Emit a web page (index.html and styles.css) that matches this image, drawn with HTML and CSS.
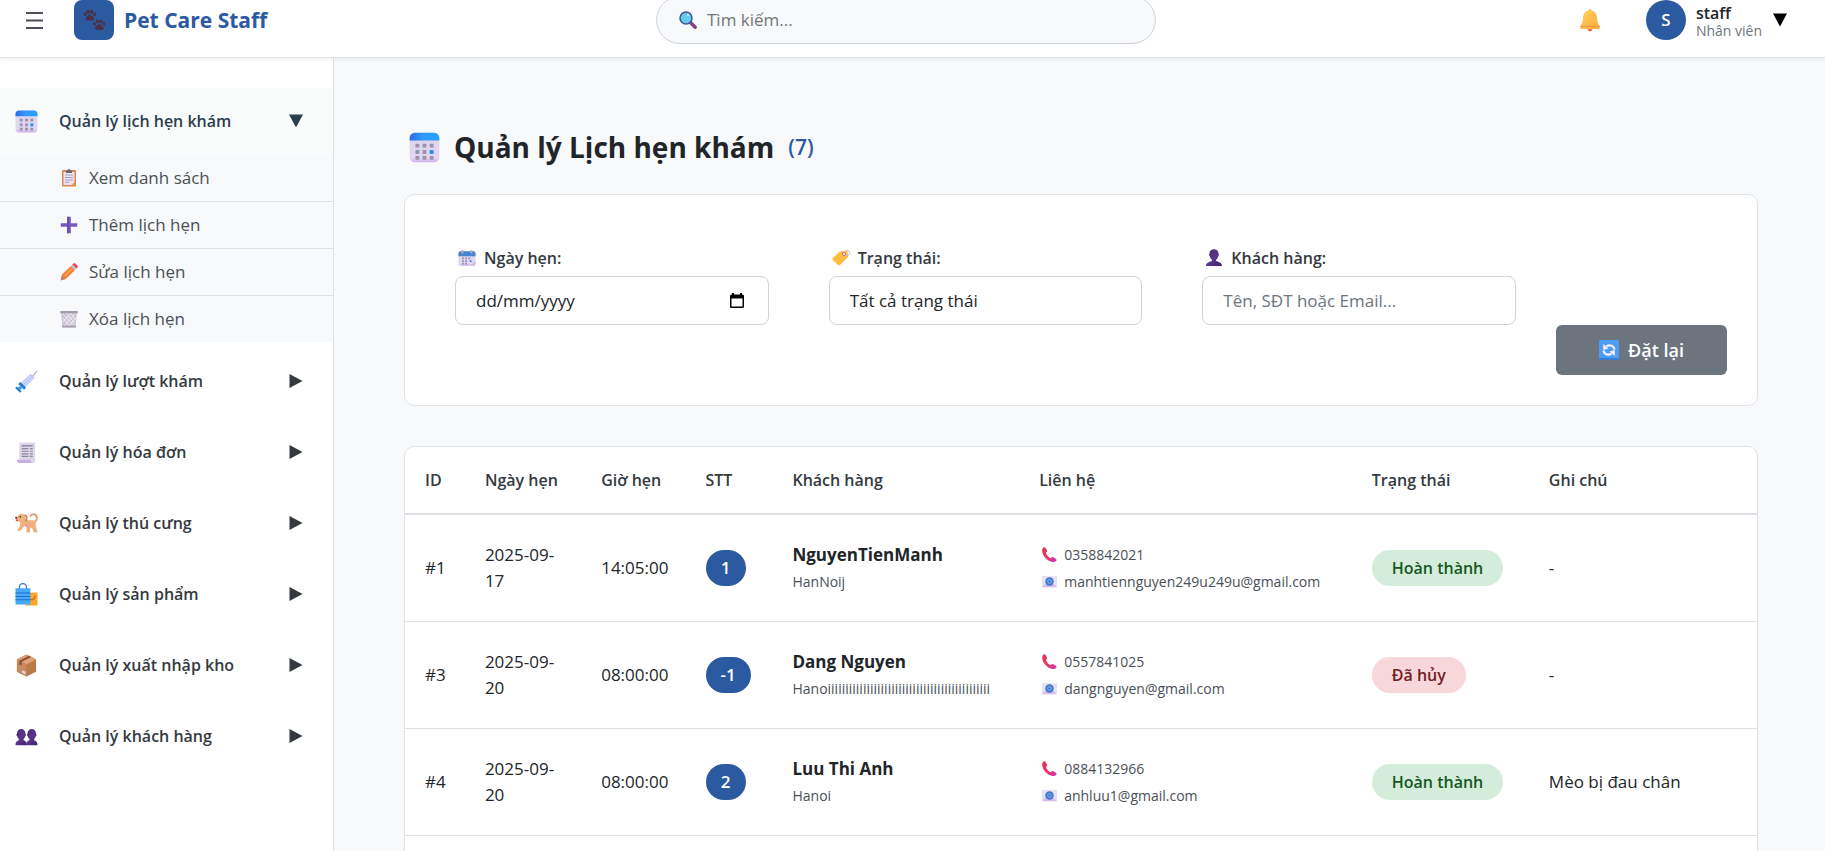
FILE: index.html
```html
<!DOCTYPE html>
<html lang="vi">
<head>
<meta charset="utf-8">
<meta name="viewport" content="width=device-width, initial-scale=1">
<title>Pet Care Staff</title>
<link rel="stylesheet" href="styles.css">
</head>
<body>
<svg class="defs" aria-hidden="true">
  <defs>
    <linearGradient id="g-blue" x1="0" x2="1"><stop offset="0" stop-color="#2d6be8"/><stop offset=".45" stop-color="#2f9bff"/><stop offset="1" stop-color="#2a9dff"/></linearGradient>
    <linearGradient id="g-lilac" x1="0" y1="0" x2="0" y2="1"><stop offset="0" stop-color="#dcd5ea"/><stop offset=".85" stop-color="#e2d6f3"/><stop offset="1" stop-color="#cdaeea"/></linearGradient>
    <linearGradient id="g-gold" x1="0" y1="0" x2="1" y2="1"><stop offset="0" stop-color="#ffd75e"/><stop offset="1" stop-color="#fba63c"/></linearGradient>
    <linearGradient id="g-purple" x1="0" y1="0" x2="1" y2="1"><stop offset="0" stop-color="#3f2a66"/><stop offset=".5" stop-color="#5a3590"/><stop offset="1" stop-color="#3d2369"/></linearGradient>
    <linearGradient id="g-pink" x1="0" y1="0" x2="1" y2="1"><stop offset="0" stop-color="#d7374f"/><stop offset=".55" stop-color="#ee3466"/><stop offset="1" stop-color="#c837b8"/></linearGradient>
  </defs>
  <symbol id="calendar" viewBox="0 0 24 24">
    <rect x="0.5" y="0.5" width="23" height="23" rx="4" fill="url(#g-lilac)"/>
    <path d="M.5 6.500V4.500a4 4 0 0 1 4-4h15a4 4 0 0 1 4 4v2z" fill="url(#g-blue)"/>
    <g fill="#9b91a8"><path d="M5 9h3v3H5zM10.500 9h3v3h-3zM16 9h3v3h-3zM5 14h3v3H5zM10.500 14h3v3h-3zM5 18.500h3v3H5zM10.500 18.500h3v3h-3zM16 18.500h3v3h-3z"/></g>
    <path d="M16 14h3v3h-3z" fill="#1f8ff5"/>
  </symbol>
  <symbol id="spiral" viewBox="0 0 20 18">
    <rect x=".5" y="1.500" width="19" height="16" rx="2.500" fill="url(#g-lilac)"/>
    <path d="M.5 7V4A2.500 2.500 0 0 1 3 1.500h14A2.500 2.500 0 0 1 19.500 4v3z" fill="#4585cf"/>
    <path d="M4 0h2v4H4zM14 0h2v4h-2z" fill="#b9adc9"/>
    <path d="M4.500 8.500h2v2h-2zM8 8.500h2v2H8zM11.500 8.500h2v2h-2zM4.500 11.500h2v2h-2zM8 11.500h2v2H8zM4.500 14.300h2v2h-2zM8 14.300h2v2H8z" fill="#9a90a8"/>
    <path d="M13 11.500h2v2h-2z" fill="#2f83e6"/><path d="M14 17.500l5.500-5v2.500a2.500 2.500 0 0 1-2.500 2.500z" fill="#cbb9dd"/>
  </symbol>
  <symbol id="paws" viewBox="0 0 24 24">
    <g fill="#4b3147"><ellipse cx="2.200" cy="5.500" rx="1.500" ry="2"/><ellipse cx="5.300" cy="3" rx="1.700" ry="2.100"/><ellipse cx="9" cy="3" rx="1.700" ry="2.100"/><ellipse cx="12.200" cy="5.500" rx="1.500" ry="2"/><path d="M7.200 5.700c2 0 2.500 1.700 3.800 2.800 1.400 1.300 1 3.400-1 3.400H4.500c-2 0-2.300-2.100-1-3.400 1.200-1.100 1.700-2.800 3.700-2.800z"/>
    <ellipse cx="12" cy="15.500" rx="1.500" ry="2"/><ellipse cx="15.100" cy="13" rx="1.700" ry="2.100"/><ellipse cx="18.800" cy="13" rx="1.700" ry="2.100"/><ellipse cx="22" cy="15.500" rx="1.500" ry="2"/><path d="M17 15.700c2 0 2.500 1.700 3.800 2.800 1.400 1.300 1 3.400-1 3.400h-5.500c-2 0-2.300-2.100-1-3.400 1.200-1.100 1.700-2.800 3.700-2.800z"/></g>
  </symbol>
  <symbol id="search" viewBox="0 0 18 18">
    <path d="M11 11l5.200 5.200" stroke="#84438a" stroke-width="3.400" stroke-linecap="round"/>
    <circle cx="7" cy="7" r="6" fill="#5fcdec" stroke="#46538f" stroke-width="1.500"/><circle cx="9" cy="4" r="1" fill="#dff7ff"/>
  </symbol>
  <symbol id="bell" viewBox="0 0 22 24">
    <circle cx="11" cy="21" r="2.400" fill="#f36f3d"/>
    <path d="M11 1c1 0 1.500.7 1.500 1.600 3.800.8 5.300 4 5.600 8.400.2 3 .9 5 2.400 6.800.7.900.3 3.200-.9 3.200H2.400c-1.200 0-1.600-2.300-.9-3.200C3 16 3.700 14 3.900 11c.3-4.400 1.800-7.600 5.600-8.400C9.500 1.700 10 1 11 1z" fill="url(#g-gold)"/>
    <path d="M1.300 18.500h19.400" stroke="#f0983c" stroke-width="1.200"/>
  </symbol>
  <symbol id="clipboard" viewBox="0 0 18 18">
    <rect x="2" y="1" width="14" height="16.500" rx="1.200" fill="#dc8650"/><path d="M3.500 3h11v10l-3 3h-8z" fill="#ebe2f4"/><path d="M11.500 16l3-3v3z" fill="#f4a45c"/>
    <path d="M6 1.500h1.500a1.500 1.500 0 0 1 3 0H12V4H6z" fill="#6b6472"/><path d="M5 6h8M5 8.500h8M5 11h8M5 13.300h4" stroke="#a9a1b4" stroke-width="1"/>
  </symbol>
  <symbol id="plus" viewBox="0 0 18 18"><path d="M7.200.8h3.600v6.400h6.400v3.600h-6.400v6.400H7.200v-6.400H.8V7.200h6.400z" fill="#7a55c4"/><path d="M7.200.8h1.300v16.400H7.200z" fill="#5f4b98"/></symbol>
  <symbol id="pencil" viewBox="0 0 18 18"><path d="M2 11.500L11 3l4 4-9 8.700-5.200 1.600z" fill="#fb7b35"/><path d="M12.300 5.500L4.700 13" stroke="#ffad62" stroke-width="1.500"/><path d="M11 3l1.400-1.400 4 4L15 7z" fill="#cbb8e2"/><path d="M12.400 1.600l1-1a1.500 1.500 0 0 1 2 0l2 2a1.500 1.500 0 0 1 0 2l-1 1z" fill="#f2474c"/><path d="M1.800 12.500l3.700 3.400-5 1.600z" fill="#bd8275"/></symbol>
  <symbol id="trash" viewBox="0 0 18 18"><path d="M1 2h16l-1.600 15.500H2.600z" fill="#c9c3d1"/><path d="M3 4l11.500 12M6 3l9 10M10 3l5 6M3 8l8 9M15 4L4 16M11 3l-8 9M16 8l-8 9" stroke="#f6f4f9" stroke-width=".9"/><path d="M.3 1h17.400v2.200H.3z" fill="#a39bac"/><path d="M2 15.500h14v2H2z" fill="#aaa2b2"/></symbol>
  <symbol id="syringe" viewBox="0 0 24 24"><path d="M18 7l5-6" stroke="#9eb0c8" stroke-width="1.200"/><path d="M6 13.500L16.500 4l4 4L10 18.500z" fill="#b2c7f5"/><path d="M8 14l9-8M10 16l9-8" stroke="#dcd8fb" stroke-width="1.400"/><path d="M4.500 13.500l6 6" stroke="#2379d0" stroke-width="3"/><path d="M7 17l-4 4" stroke="#4f9fea" stroke-width="3.500"/><path d="M1 18l5 5" stroke="#2380dc" stroke-width="2.400"/></symbol>
  <symbol id="receipt" viewBox="0 0 24 24"><path d="M4.500 1l1.500 1 1.500-1L9 2l1.500-1L12 2l1.500-1L15 2l1.500-1L18 2l1.500-1 1.500 1v18a3 3 0 0 1-3 3H7.500l-3-3z" fill="#ded6ea"/><path d="M2 19.500h14.500c0 2 .8 3.500 2 3.500H5c-2 0-3-1.500-3-3.500z" fill="#c7aee1"/><path d="M7 5h11.500" stroke="#8b8098" stroke-width="1.500"/><path d="M7 8h7m1.500 0h3M7 10.700h7m1.500 0h3M7 13.400h7m1.500 0h3M7 16.100h7m1.500 0h3" stroke="#8f859c" stroke-width="1.200"/></symbol>
  <symbol id="dog" viewBox="0 0 24 24"><path d="M19.500 11c4-1.500 4.300-7 1-8.500-2.200-1-4.500.2-4.500 2.500" fill="none" stroke="#dd9b6d" stroke-width="1.800"/><path d="M3.500 3.500C5 1.200 9 1.300 10.500 4l1 4.500h8.500c1.800 1 1.700 3 1.500 5l2 8h-3.800l-2-5-2 1v4h-4l.7-6-2.900-1-2 3.500-4 2-1-2 2.500-2.500L5.500 11 3 9 .5 6.500z" fill="#efb17e"/><path d="M10 3c2.500.5 3 4 1 6.500" fill="none" stroke="#cf8555" stroke-width="1.800"/><path d="M10.500 13h5l-1 3h-3z" fill="#f49aa0"/><circle cx="5.500" cy="5" r=".9" fill="#42302d"/><circle cx="1.200" cy="6" r="1.100" fill="#4a3030"/><path d="M1 8l2 1.500" stroke="#e64656" stroke-width="1.600"/></symbol>
  <symbol id="bags" viewBox="0 0 24 24"><path d="M11 10h12.500v13.500H11z" fill="#f9a62d"/><path d="M15 13v2c0 4 6 3 6-2" fill="none" stroke="#cf6c30" stroke-width="1.300"/><path d="M4.500 7V4.500a3.700 3.700 0 0 1 7.500 0V7" fill="none" stroke="#3678be" stroke-width="1.300"/><path d="M.5 5.500H16v17H.5z" fill="#47a9fa"/><path d="M.5 10.500H16M.5 14H16M.5 17.500H16" stroke="#236fc8" stroke-width="1.100"/></symbol>
  <symbol id="box" viewBox="0 0 24 24"><path d="M12 .5l10 5v13l-10 5-10-5v-13z" fill="#b8794d"/><path d="M12 .5l10 5-10 5.500-10-5.500z" fill="#dea477"/><path d="M12 11v12.500l-10-5v-13z" fill="#c68a5c"/><path d="M7 8.200L17 3l-2.500-1.200L4.500 7v4L7 12z" fill="#875139"/><path d="M7.500 17l3.500 1.600v2.800l-3.500-1.600z" fill="#e9d9ec"/></symbol>
  <symbol id="users" viewBox="0 0 24 24"><g fill="url(#g-purple)"><path d="M2 9c0-6.500 9-6.500 9 0 .7.500.5 2-.2 2.500-.4 1.600-1 2.500-1.900 3.200V16c2 .4 3.200 1.800 3.200 5H.5c0-3.200 1.500-4.600 3.600-5v-1.300c-.9-.7-1.500-1.600-1.900-3.200C1.400 11 1.300 9.500 2 9z"/><path d="M13 9c0-6.500 9-6.500 9 0 .7.500.5 2-.2 2.500-.4 1.600-1 2.500-1.900 3.200V16c2 .4 3.600 1.800 3.600 5h-12c0-3.200 1.500-4.600 3.600-5v-1.300c-.9-.7-1.500-1.600-1.900-3.200-.8-.5-.9-2-.2-2.500z"/></g></symbol>
  <symbol id="user" viewBox="0 0 18 18"><path d="M4.500 4.500c0-5.600 9-5.600 9 0 .8.400.6 2-.2 2.400-.4 2-1.200 3-2.300 3.800v1.400c3 .8 6 2 6 5H1c0-3 3-4.200 6-5v-1.400C6 10 5.100 8.900 4.700 6.900c-.8-.4-1-2-.2-2.400z" fill="url(#g-purple)"/></symbol>
  <symbol id="tag" viewBox="0 0 18 18"><path d="M10 2h5.500l.5 6-8 8a1.500 1.500 0 0 1-2 0L.8 11a1.500 1.500 0 0 1 0-2L8 2.500z" fill="#fcbd40"/><circle cx="12" cy="5" r="1.600" fill="#fff" stroke="#e56647" stroke-width="1"/><path d="M12 5c.5-5 6-4.500 5.500-.8-.2 2.200-2.500 3-4.500 2" fill="none" stroke="#cab5e4" stroke-width="1"/></symbol>
  <symbol id="reset" viewBox="0 0 20 20"><rect width="20" height="20" rx="1.500" fill="#4c9df5"/><path d="M0 18h20v2H0z" fill="#397ddd"/><g fill="none" stroke="#f5efff" stroke-width="2.300"><path d="M15.500 9.500C15 6 11 4.200 7.500 6.300M4.500 10.500c.5 3.500 4.500 5.300 8 3.200"/></g><path d="M4.200 4v6l5.300-1.500zM15.800 16v-6l-5.300 1.500z" fill="#f5efff"/></symbol>
  <symbol id="phone" viewBox="0 0 16 16"><path d="M1 1c1-1.200 2.300-.8 3 .3l1.300 2.500c.5 1-.2 1.800-1.100 2.200.8 3 2.600 4.900 5.600 6 .4-1 1.300-1.700 2.300-1.100l2.600 1.500c1 .7 1.200 2 .1 2.900-1.500 1-4.200 1-6.600-.3C4.500 13 1.200 9.300.4 5.500.1 3.700 0 2.200 1 1z" fill="url(#g-pink)"/></symbol>
  <symbol id="email" viewBox="0 0 16 12"><path d="M0 0h16v12H0z" fill="#e8e1f2"/><path d="M0 12l5-5h6l5 5z" fill="#d5bceb"/><ellipse cx="8" cy="6" rx="4.500" ry="4.500" fill="#3d79cf"/><ellipse cx="8" cy="6" rx="2" ry="2" fill="none" stroke="#8fb7ef"/></symbol>
  <symbol id="picker" viewBox="0 0 14 15"><path d="M0 3a1.500 1.500 0 0 1 1.500-1.500H2V0h2v1.500h6V0h2v1.500h.5A1.500 1.500 0 0 1 14 3v10.500a1.500 1.500 0 0 1-1.500 1.500h-11A1.500 1.500 0 0 1 0 13.500zM1.500 5.500v8h11v-8z" fill="#000" fill-rule="evenodd"/></symbol>
  <symbol id="down" viewBox="0 0 14 14"><path d="M0 .5h14l-7 13z" fill="currentColor"/></symbol>
  <symbol id="right" viewBox="0 0 14 14"><path d="M.5 0v14l13-7z" fill="currentColor"/></symbol>
</svg>

<header class="topbar">
  <div class="brand">
    <button class="menu-button" type="button" aria-label="Menu"><svg viewBox="0 0 17 17"><path d="M0 1h17M0 8.500h17M0 16h17" stroke="currentColor" stroke-width="2"/></svg></button>
    <span class="brand-logo"><svg><use href="#paws"/></svg></span>
    <span class="brand-name">Pet Care Staff</span>
  </div>
  <label class="search"><svg><use href="#search"/></svg><input type="search" placeholder="Tìm kiếm..." aria-label="Tìm kiếm"></label>
  <div class="account">
    <button class="bell" type="button" aria-label="Thông báo"><svg><use href="#bell"/></svg></button>
    <button class="profile" type="button">
      <span class="avatar">S</span>
      <span class="profile-text"><strong>staff</strong><span>Nhân viên</span></span>
      <svg class="profile-arrow"><use href="#down"/></svg>
    </button>
  </div>
</header>

<div class="shell">
  <nav class="sidebar">
    <button class="nav-item nav-item-open" type="button"><svg class="nav-icon"><use href="#calendar"/></svg><span>Quản lý lịch hẹn khám</span><svg class="nav-arrow"><use href="#down"/></svg></button>
    <div class="subnav">
      <a href="#list"><svg><use href="#clipboard"/></svg>Xem danh sách</a>
      <a href="#add"><svg><use href="#plus"/></svg>Thêm lịch hẹn</a>
      <a href="#edit"><svg><use href="#pencil"/></svg>Sửa lịch hẹn</a>
      <a href="#delete"><svg><use href="#trash"/></svg>Xóa lịch hẹn</a>
    </div>
    <button class="nav-item" type="button"><svg class="nav-icon"><use href="#syringe"/></svg><span>Quản lý lượt khám</span><svg class="nav-arrow"><use href="#right"/></svg></button>
    <button class="nav-item" type="button"><svg class="nav-icon"><use href="#receipt"/></svg><span>Quản lý hóa đơn</span><svg class="nav-arrow"><use href="#right"/></svg></button>
    <button class="nav-item" type="button"><svg class="nav-icon"><use href="#dog"/></svg><span>Quản lý thú cưng</span><svg class="nav-arrow"><use href="#right"/></svg></button>
    <button class="nav-item" type="button"><svg class="nav-icon"><use href="#bags"/></svg><span>Quản lý sản phẩm</span><svg class="nav-arrow"><use href="#right"/></svg></button>
    <button class="nav-item" type="button"><svg class="nav-icon"><use href="#box"/></svg><span>Quản lý xuất nhập kho</span><svg class="nav-arrow"><use href="#right"/></svg></button>
    <button class="nav-item" type="button"><svg class="nav-icon"><use href="#users"/></svg><span>Quản lý khách hàng</span><svg class="nav-arrow"><use href="#right"/></svg></button>
  </nav>

  <main class="content">
    <div class="page-title"><svg><use href="#calendar"/></svg><h1>Quản lý Lịch hẹn khám</h1><span class="count">(7)</span></div>

    <form class="card filters">
      <div class="field">
        <label for="date"><svg><use href="#spiral"/></svg>Ngày hẹn:</label>
        <div class="control"><input id="date" class="date-input" type="text" placeholder="dd/mm/yyyy"><button class="picker" type="button" aria-label="Chọn ngày"><svg><use href="#picker"/></svg></button></div>
      </div>
      <div class="field">
        <label for="status"><svg><use href="#tag"/></svg>Trạng thái:</label>
        <div class="control"><select id="status"><option>Tất cả trạng thái</option><option>Hoàn thành</option><option>Đã hủy</option></select></div>
      </div>
      <div class="field">
        <label for="customer"><svg><use href="#user"/></svg>Khách hàng:</label>
        <div class="control"><input id="customer" type="text" placeholder="Tên, SĐT hoặc Email..."></div>
      </div>
      <button class="reset" type="reset"><svg><use href="#reset"/></svg>Đặt lại</button>
    </form>

    <section class="card list">
      <table>
        <colgroup><col class="c-id"><col class="c-date"><col class="c-time"><col class="c-no"><col class="c-customer"><col class="c-contact"><col class="c-status"><col></colgroup>
        <thead><tr><th>ID</th><th>Ngày hẹn</th><th>Giờ hẹn</th><th>STT</th><th>Khách hàng</th><th>Liên hệ</th><th>Trạng thái</th><th>Ghi chú</th></tr></thead>
        <tbody>
          <tr>
            <td>#1</td><td>2025-09-17</td><td>14:05:00</td><td><span class="pill number">1</span></td>
            <td><div class="name">NguyenTienManh</div><div class="small">HanNoij</div></td>
            <td><div class="small contact"><svg><use href="#phone"/></svg>0358842021</div><div class="small contact"><svg><use href="#email"/></svg>manhtiennguyen249u249u@gmail.com</div></td>
            <td><span class="pill done">Hoàn thành</span></td><td>-</td>
          </tr>
          <tr>
            <td>#3</td><td>2025-09-20</td><td>08:00:00</td><td><span class="pill number">-1</span></td>
            <td><div class="name">Dang Nguyen</div><div class="small">Hanoiiiiiiiiiiiiiiiiiiiiiiiiiiiiiiiiiiiiiiiiiiiiii</div></td>
            <td><div class="small contact"><svg><use href="#phone"/></svg>0557841025</div><div class="small contact"><svg><use href="#email"/></svg>dangnguyen@gmail.com</div></td>
            <td><span class="pill cancelled">Đã hủy</span></td><td>-</td>
          </tr>
          <tr>
            <td>#4</td><td>2025-09-20</td><td>08:00:00</td><td><span class="pill number">2</span></td>
            <td><div class="name">Luu Thi Anh</div><div class="small">Hanoi</div></td>
            <td><div class="small contact"><svg><use href="#phone"/></svg>0884132966</div><div class="small contact"><svg><use href="#email"/></svg>anhluu1@gmail.com</div></td>
            <td><span class="pill done">Hoàn thành</span></td><td>Mèo bị đau chân</td>
          </tr>
          <tr><td></td><td></td><td></td><td></td><td></td><td></td><td></td><td></td></tr>
        </tbody>
      </table>
    </section>
  </main>
</div>
</body>
</html>
```
FILE: styles.css
```css
* { box-sizing: border-box; }

body {
  margin: 0;
  height: 100vh;
  display: flex;
  flex-direction: column;
  overflow: hidden;
  background: #f8f9fb;
  color: #212529;
  font: 17px/26px "Open Sans", "Noto Sans", sans-serif;
}

button, input, select { font: inherit; color: inherit; }
button { border: 0; background: none; padding: 0; cursor: pointer; }
svg { display: block; flex: none; }
.defs { position: absolute; width: 0; height: 0; }

/* Top bar */
.topbar {
  display: grid;
  grid-template-columns: minmax(0, 1fr) 500px minmax(0, 1fr);
  align-items: center;
  flex: none;
  height: 58px;
  padding: 0 37px 17px 24px;
  background: #fff;
  border-bottom: 1px solid #dee2e6;
  box-shadow: 0 2px 4px rgba(0, 0, 0, .05);
  position: relative;
}
.brand { display: flex; align-items: center; }
.menu-button { padding: 0 2px; margin-right: 29px; color: #495057; }
.menu-button svg { width: 17px; height: 17px; }
.brand-logo {
  display: grid;
  place-items: center;
  width: 40px;
  height: 40px;
  margin-right: 10px;
  border-radius: 8px;
  background: #2c5aa0;
}
.brand-logo svg { width: 23px; height: 23px; }
.brand-name { font-size: 21px; font-weight: 700; color: #2c5aa0; }

.search {
  display: flex;
  align-items: center;
  gap: 10px;
  height: 48px;
  margin: -4px 0;
  padding: 0 22px;
  border: 1px solid #ced4da;
  border-radius: 24px;
  background: #f8f9fa;
}
.search svg { width: 18px; height: 18px; }
.search input { flex: 1; min-width: 0; border: 0; padding: 0; background: none; outline: 0; }
.search input::placeholder { color: #757575; opacity: 1; }

.account { display: flex; align-items: center; justify-content: flex-end; gap: 45px; }
.bell svg { width: 22px; height: 24px; }
.profile { display: flex; align-items: center; gap: 10px; text-align: left; }
.avatar {
  display: grid;
  place-items: center;
  width: 40px;
  height: 40px;
  border-radius: 50%;
  background: #2c5aa0;
  color: #fff;
  font-weight: 600;
}
.profile-text { display: flex; flex-direction: column; padding-top: 4px; font-size: 14px; line-height: 18px; color: #6c757d; }
.profile-text strong { font-size: 16px; font-weight: 600; color: #212529; }
.profile-arrow { width: 16px; height: 14px; color: #000; }

/* Sidebar */
.shell { flex: 1; min-height: 0; display: flex; }
.sidebar {
  flex: none;
  width: 334px;
  padding-top: 30px;
  border-right: 1px solid #dee2e6;
  background: #fff;
  overflow: hidden;
}
.nav-item {
  display: flex;
  align-items: center;
  gap: 21px;
  width: 100%;
  height: 66px;
  margin-bottom: 5px;
  padding: 0 30px 0 15px;
  font-size: 16px;
  font-weight: 600;
  color: #343a40;
  text-align: left;
}
.nav-item span { flex: 1; }
.nav-item-open { margin-bottom: 0; background: #fafcfb; color: #2c3e50; }
.nav-icon { width: 23px; height: 23px; }
.nav-arrow { width: 14px; height: 14px; }
.subnav { margin-bottom: 6px; background: #f8f9fb; }
.subnav a {
  display: flex;
  align-items: center;
  gap: 11px;
  height: 47px;
  padding-left: 60px;
  color: #495057;
  text-decoration: none;
}
.subnav a + a { border-top: 1px solid #dee2e6; }
.subnav svg { width: 18px; height: 18px; }

/* Content */
.content { flex: 1; min-width: 0; padding: 64px 67px 0 70px; overflow: hidden; }
.page-title { display: flex; align-items: center; gap: 14px; height: 50px; margin-bottom: 22px; padding-left: 5px; }
.page-title svg { width: 31px; height: 31px; }
.page-title h1 { margin: 0; font-size: 28px; font-weight: 700; }
.count { font-size: 21px; font-weight: 600; color: #2c5aa0; }

.card { border: 1px solid #dee2e6; border-radius: 10px; background: #fff; }

.filters { display: flex; align-items: flex-end; gap: 20px; margin-bottom: 40px; padding: 30px; }
.field { flex: 1; min-width: 0; margin-bottom: 30px; padding: 20px; }
.field label { display: flex; align-items: center; gap: 8px; margin-bottom: 5px; padding-left: 3px; font-size: 16px; font-weight: 600; color: #343a40; }
.field label svg { width: 18px; height: 18px; }
.control {
  display: flex;
  align-items: center;
  height: 49px;
  padding: 0 20px;
  border: 1px solid #ced4da;
  border-radius: 8px;
}
.control input, .control select { flex: 1; width: 100%; min-width: 0; border: 0; padding: 0; background: none; outline: 0; appearance: none; }
.control input::placeholder { color: #6c757d; opacity: 1; }
.control .date-input::placeholder { color: #212529; }
.picker { margin-right: 4px; }
.picker svg { width: 14px; height: 15px; }
.reset {
  display: flex;
  align-items: center;
  justify-content: center;
  gap: 9px;
  width: 171px;
  height: 50px;
  border-radius: 6px;
  background: #6c757d;
  color: #fff;
  font-size: 18px;
  font-weight: 600;
}
.reset svg { width: 20px; height: 20px; }

/* Appointment table */
.list { overflow: hidden; }
table { width: 100%; table-layout: fixed; border-collapse: separate; border-spacing: 0; }
.c-id { width: 4.43%; }
.c-date { width: 8.6%; }
.c-time { width: 7.72%; }
.c-no { width: 6.43%; }
.c-customer { width: 18.25%; }
.c-contact { width: 24.6%; }
.c-status { width: 13.1%; }
th { height: 68px; padding: 0 20px; border-bottom: 2px solid #dee2e6; font-size: 16px; font-weight: 600; color: #343a40; text-align: left; }
td { height: 107px; padding: 0 20px; border-bottom: 1px solid #dee2e6; }
.name { font-weight: 700; }
.small { font-size: 14px; line-height: 27px; color: #495057; white-space: nowrap; }
.contact { display: flex; align-items: center; gap: 7px; padding-left: 3px; }
.contact svg { width: 15px; height: 15px; }
.pill { display: inline-block; min-width: 40px; padding: 5px 15px; border-radius: 20px; font-weight: 600; text-align: center; white-space: nowrap; }
.number { background: #2c5aa0; color: #fff; }
.done, .cancelled { padding: 5px 20px; font-size: 16px; }
.done { background: #d4edda; color: #155724; }
.cancelled { background: #f8d7da; color: #721c24; }
```
